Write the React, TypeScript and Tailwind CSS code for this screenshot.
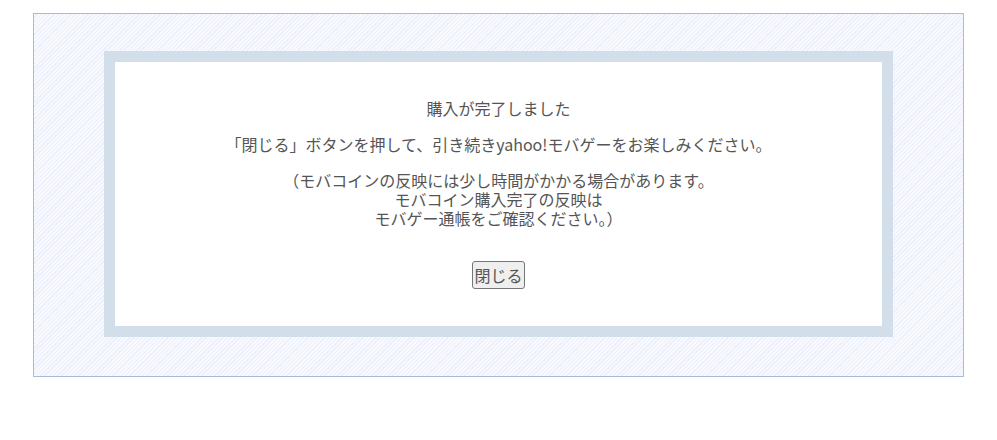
export default function App() {
  return (
    <div className="w-[997px] h-[440px] bg-white pt-[13px] pl-[33px] font-['Noto_Sans_CJK_JP',sans-serif] text-[#555]">
      <div className="w-[931px] h-[364px] border border-[#a9bbd6] px-[70px] pt-[37px] bg-[repeating-linear-gradient(135deg,#f7f9fe_0px,#f7f9fe_2px,#eaeff9_2px,#eaeff9_3px)]">
        <div className="border-[11px] border-[#d2dfeb] bg-white h-[286px] flex flex-col items-center pt-[37px] text-[16px] leading-[19px]">
          <p>購入が完了しました</p>
          <p className="mt-[17px]">「閉じる」ボタンを押して、引き続きyahoo!モバゲーをお楽しみください。</p>
          <p className="mt-[17px] text-center">
            （モバコインの反映には少し時間がかかる場合があります。
            <br />
            モバコイン購入完了の反映は
            <br />
            モバゲー通帳をご確認ください。）
          </p>
          <button className="mt-[33px] h-[28px] px-[1px] border border-[#767676] rounded-[3px] bg-[#efefef] text-[16px] text-[#555]">
            閉じる
          </button>
        </div>
      </div>
    </div>
  )
}
